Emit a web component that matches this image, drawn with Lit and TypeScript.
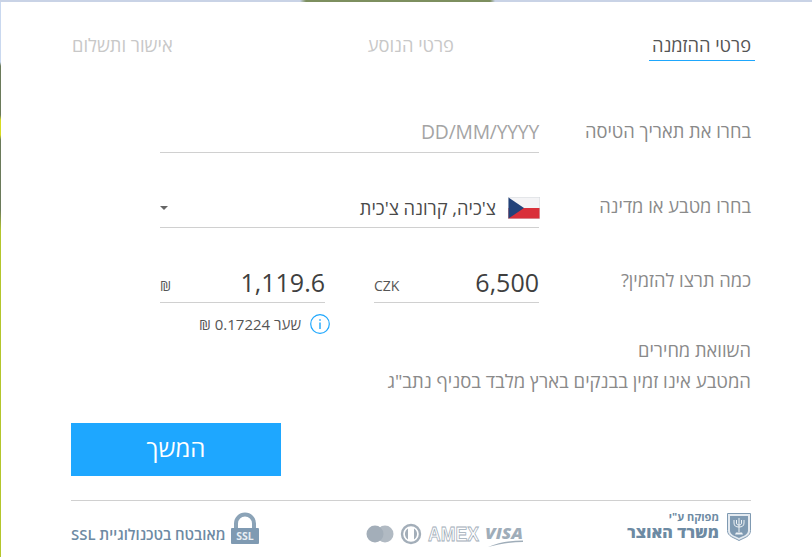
import { LitElement, html, css } from "lit";
import { customElement } from "lit/decorators.js";

@customElement("app-root")
export class AppRoot extends LitElement {
  static styles = css`
    :host { display: block; width: 812px; height: 557px; overflow: hidden; font-family: "Open Sans", "Noto Sans", "DejaVu Sans", sans-serif; }
    .bg { width: 812px; height: 557px; box-sizing: border-box; padding: 2px 0 0 1px;
      background:
        linear-gradient(90deg, #c9d3e6 0 300px, #7d8f5f 306px 490px, #c9d3e6 495px) top / 100% 2px no-repeat,
        linear-gradient(180deg, #c9d8ef 0 62px, #6a7a5a 66px 115px, #d8dc20 120px 135px, #6a7a5a 140px 210px, #b4c62c 230px) left / 1px 100% no-repeat,
        #fff; }
    .card { direction: rtl; background: #fff; height: 555px; box-sizing: border-box; padding: 0 61px 0 70px; display: flex; flex-direction: column; }
    .tabs { display: flex; justify-content: space-between; height: 59px; box-sizing: border-box; padding-top: 30px; margin-right: -4px; margin-left: 1px; }
    .tab { font-size: 18.3px; line-height: 25px; color: #c8c8c8; height: 29px; box-sizing: border-box; white-space: nowrap; }
    .tab.active { color: #555; border-bottom: 1px solid #1ea7fd; width: 106px; padding: 0 4px; }
    .row { display: flex; height: 75px; align-items: flex-end; }
    .row.first { margin-top: 17px; }
    .label { width: 212px; flex: none; font-size: 18.3px; line-height: 25px; color: #8a8a8a; align-self: flex-end; padding-bottom: 10px; }
    .row.tall .label { padding-bottom: 11px; }
    .field { width: 379px; height: 40px; box-sizing: border-box; border-bottom: 1px solid #d0d0d0; display: flex; align-items: center; }
    .ph { font-size: 19.3px; color: #a4a4a4; letter-spacing: -0.2px; direction: ltr; padding-bottom: 2px; }
    .flag { width: 32px; height: 22px; flex: none; display: block; margin-right: -1px; }
    .country { font-size: 18.3px; color: #4a4a4a; margin-right: 12px; flex: 1; }
    .caret { width: 0; height: 0; border-left: 4.5px solid transparent; border-right: 4.5px solid transparent; border-top: 4px solid #666; }
    .amounts { width: 379px; display: flex; justify-content: space-between; }
    .amt { width: 165px; height: 40px; box-sizing: border-box; border-bottom: 1px solid #d0d0d0; display: flex; justify-content: space-between; align-items: center; direction: ltr; }
    .amt .unit { font-size: 14px; color: #555; padding-top: 6px; }
    .amt .val { font-size: 25px; color: #3f3f3f; padding-bottom: 2px; }
    .rate { display: flex; margin: 11px 212px 0 0; }
    .rate-in { margin-right: 209px; display: flex; align-items: center; gap: 9px; }
    .rate-t { font-size: 15px; color: #555; white-space: nowrap; }
    .compare { font-size: 18.3px; line-height: 25px; color: #8a8a8a; margin-top: 3px; }
    .note { font-size: 18.5px; line-height: 25px; color: #8a8a8a; margin-top: 6px; }
    .btn { width: 210px; height: 53px; margin-top: 30px; margin-right: 470px; background: #1ea7ff; color: #fff; border: none; font: inherit; font-size: 24px; display: flex; align-items: center; justify-content: center; padding: 0 0 5px; box-sizing: border-box; }
    .footer { margin-top: 24px; border-top: 1px solid #d0d0d0; height: 55px; display: flex; justify-content: space-between; align-items: flex-start; padding-top: 12px; box-sizing: border-box; }
    .treasury { display: flex; gap: 8px; align-items: center; direction: rtl; width: 124px; }
    .tt { display: flex; flex-direction: column; gap: 3px; margin-top: -3px; color: #6d8aa3; white-space: nowrap; }
    .tt .s { font-size: 11px; line-height: 11px; font-weight: 700; }
    .tt .b { font-size: 16px; line-height: 15px; font-weight: 800; letter-spacing: 0.1px; }
    .cards { display: flex; direction: ltr; gap: 6px; align-items: center; justify-content: flex-end; height: 42px; width: 160px; box-sizing: border-box; }
    .ssl { display: flex; align-items: center; gap: 6px; height: 32px; direction: rtl; }
    .ssl span { font-size: 14.9px; font-weight: 600; color: #6d8aa3; white-space: nowrap; padding-top: 9px; }
    svg { display: block; overflow: visible; }
    .vt { font: italic 800 16.5px "Open Sans", sans-serif; fill: #9fadb9; }
    .at { font: 800 19.5px "Liberation Sans", sans-serif; fill: #fff; stroke: #9fadb9; stroke-width: .8px; }
    .st { font: 700 10.5px "Open Sans", sans-serif; fill: #e8eef3; }
  `;

  render() {
    return html`<div class="bg"><div class="card">
      <div class="tabs">
        <div class="tab active">פרטי ההזמנה</div>
        <div class="tab">פרטי הנוסע</div>
        <div class="tab">אישור ותשלום</div>
      </div>
      <div class="row first">
        <div class="label">בחרו את תאריך הטיסה</div>
        <div class="field"><span class="ph">DD/MM/YYYY</span></div>
      </div>
      <div class="row">
        <div class="label">בחרו מטבע או מדינה</div>
        <div class="field">
          <svg class="flag" viewBox="0 0 32 22"><rect width="32" height="22" fill="#d5d8dc"/><rect x=".5" y=".5" width="31" height="10.5" fill="#f4f4f6"/><rect x=".5" y="11" width="31" height="10.5" fill="#d9303a"/><path d="M.5.5 16 11 .5 21.5z" fill="#22427a"/></svg>
          <span class="country">צ'כיה, קרונה צ'כית</span>
          <span class="caret"></span>
        </div>
      </div>
      <div class="row tall">
        <div class="label">כמה תרצו להזמין?</div>
        <div class="amounts">
          <div class="amt"><span class="unit">CZK</span><span class="val">6,500</span></div>
          <div class="amt"><span class="unit">₪</span><span class="val">1,119.6</span></div>
        </div>
      </div>
      <div class="rate">
        <div class="rate-in">
          <svg width="20" height="20" viewBox="0 0 20 20"><circle cx="10" cy="10" r="9.3" fill="none" stroke="#1ea7fd" stroke-width="1.2"/><rect x="9.3" y="8.500" width="1.4" height="6.5" fill="#1ea7fd"/><rect x="9.3" y="5.2" width="1.4" height="1.6" fill="#1ea7fd"/></svg>
          <span class="rate-t">שער 0.17224 ₪</span>
        </div>
      </div>
      <div class="compare">השוואת מחירים</div>
      <div class="note">המטבע אינו זמין בבנקים בארץ מלבד בסניף נתב"ג</div>
      <button class="btn">המשך</button>
      <div class="footer">
        <div class="treasury">
          <svg width="24" height="28" viewBox="0 0 24 28"><path d="M.5.5h23v17c0 6-6 7-11.500 10C7 24.500.5 23.500.5 17.500z" fill="#e4eaf0" stroke="#7f9ab2"/><path d="M3 3h18v14.500c0 4.500-5 5.500-9 7.500-4-2-9-3-9-7.500z" fill="#7f9ab2"/><path d="M12 5v14M7 7v3c0 3 2 4 5 4s5-1 5-4V7M9.500 7v3c0 1.500 1 2 2.500 2s2.500-.5 2.500-2V7" fill="none" stroke="#eef2f5" stroke-width="1"/><path d="M9 19.500h6l1 2H8z" fill="#eef2f5"/></svg>
          <div class="tt"><span class="s">מפוקח ע"י</span><span class="b">משרד האוצר</span></div>
        </div>
        <div class="cards">
          <svg width="28" height="18" viewBox="0 0 28 18"><circle cx="19" cy="9" r="8.500" fill="#b1bac3"/><circle cx="9" cy="9" r="8.500" fill="#a3aeb9"/></svg>
          <svg width="22" height="20" viewBox="0 0 22 20"><circle cx="11" cy="10" r="9" fill="none" stroke="#a3aeb9" stroke-width="2.400"/><path d="M8 4.500a6.500 6.500 0 0 0 0 11zM14 4.500a6.500 6.500 0 0 1 0 11z" fill="#a3aeb9"/></svg>
          <svg width="51" height="26" viewBox="0 0 51 26"><text x="0" y="19.500" class="at" textLength="51" lengthAdjust="spacingAndGlyphs">AMEX</text></svg>
          <svg width="38" height="28" viewBox="0 0 38 28"><text x="0" y="19" class="vt" textLength="38" lengthAdjust="spacingAndGlyphs">VISA</text><path d="M3 27C14 22 26 20.500 38 20.500V22C26 22 14 24 3 27z" fill="#9fadb9"/></svg>
        </div>
        <div class="ssl">
          <svg width="28" height="32" viewBox="0 0 28 32"><path d="M5 16V10.500a9 9 0 0 1 18 0V16" fill="none" stroke="#8ba3b7" stroke-width="4"/><rect x="0" y="15" width="28" height="16" rx="1" fill="#7f9ab2"/><text x="14" y="27" text-anchor="middle" class="st" direction="ltr">SSL</text></svg>
          <span>מאובטח בטכנולוגיית SSL</span>
        </div>
      </div>
    </div></div>`;
  }
}
